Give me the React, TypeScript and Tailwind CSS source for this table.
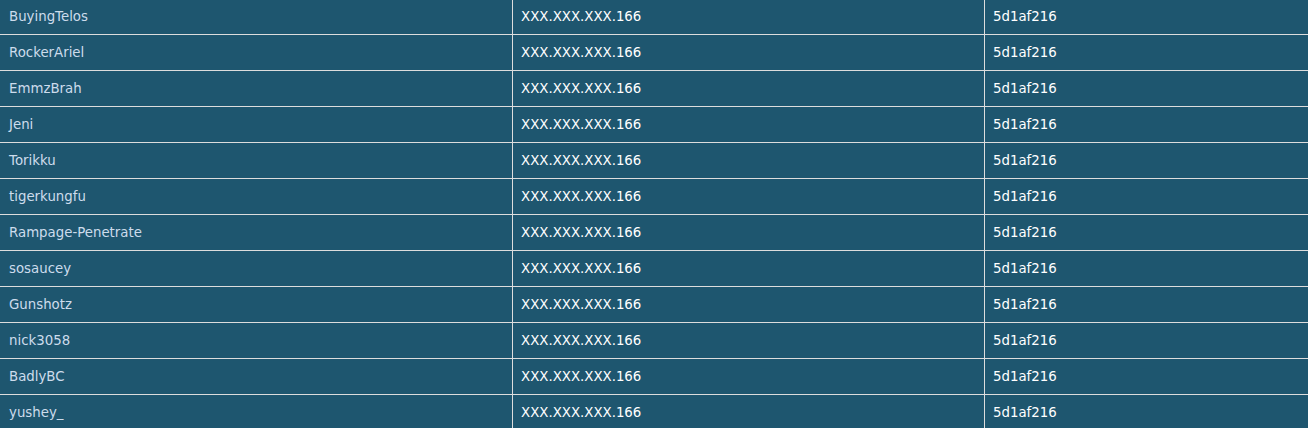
import React from "react";

const names = [
  "BuyingTelos",
  "RockerAriel",
  "EmmzBrah",
  "Jeni",
  "Torikku",
  "tigerkungfu",
  "Rampage-Penetrate",
  "sosaucey",
  "Gunshotz",
  "nick3058",
  "BadlyBC",
  "yushey_",
];

export default function App() {
  return (
    <div className="w-[1308px] h-[428px] overflow-hidden bg-[#1e566f]" style={{ fontFamily: '"DejaVu Sans", Verdana, sans-serif' }}>
      <div className="flex flex-col text-[13.33px]">
        {names.map((n, i) => (
          <div
            key={n}
            className={`flex ${i === 0 ? "h-[35px]" : "h-[36px]"} border-b border-[#dddddd]`}
          >
            <div className="w-[513px] border-r border-[#dddddd] pl-[9px] flex items-center text-[#cddcec]">
              {n}
            </div>
            <div className="w-[472px] border-r border-[#dddddd] pl-[8px] flex items-center text-white">
              XXX.XXX.XXX.166
            </div>
            <div className="flex-1 pl-[8px] flex items-center text-white">5d1af216</div>
          </div>
        ))}
      </div>
    </div>
  );
}
